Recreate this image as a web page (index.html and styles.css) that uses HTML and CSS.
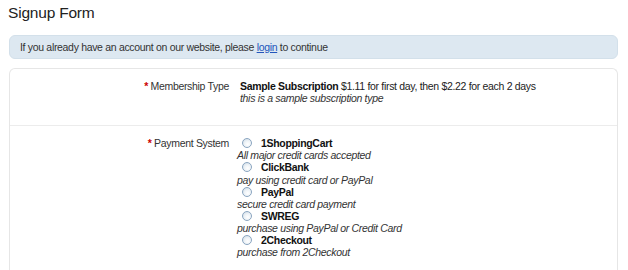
FILE: index.html
```html
<!DOCTYPE html>
<html>
<head>
<meta charset="utf-8">
<link rel="stylesheet" href="styles.css">
</head>
<body>
<h1 class="title">Signup Form</h1>
<div class="info">If you already have an account on our website, please <a href="#" class="link">login</a> to continue</div>
<div class="form">
  <div class="row row-first">
    <div class="label"><span class="req">*</span> Membership Type</div>
    <div class="value">
      <div class="line"><b>Sample Subscription</b> $1.11 for first day, then $2.22 for each 2 days</div>
      <div class="desc">this is a sample subscription type</div>
    </div>
  </div>
  <div class="row">
    <div class="label"><span class="req">*</span> Payment System</div>
    <div class="value value-pay">
      <div class="opt"><span class="radio"></span><b>1ShoppingCart</b></div>
      <div class="desc">All major credit cards accepted</div>
      <div class="opt"><span class="radio"></span><b>ClickBank</b></div>
      <div class="desc">pay using credit card or PayPal</div>
      <div class="opt"><span class="radio"></span><b>PayPal</b></div>
      <div class="desc">secure credit card payment</div>
      <div class="opt"><span class="radio"></span><b>SWREG</b></div>
      <div class="desc">purchase using PayPal or Credit Card</div>
      <div class="opt"><span class="radio"></span><b>2Checkout</b></div>
      <div class="desc">purchase from 2Checkout</div>
    </div>
  </div>
</div>
</body>
</html>
```
FILE: styles.css
```css
body {
  margin: 0;
  padding: 0 10px 0 9px;
  background: #fff;
  font-family: "Liberation Sans", Arial, sans-serif;
  font-size: 10.5px;
  letter-spacing: -0.32px;
  color: #222;
}
.title {
  margin: 0 0 0 -1px;
  padding-top: 3px;
  font-family: "Liberation Sans", Arial, sans-serif;
  font-weight: normal;
  font-size: 15.5px;
  letter-spacing: -0.2px;
  line-height: 20px;
  color: #222;
}
.info {
  margin-top: 12px;
  height: 24px;
  line-height: 22px;
  box-sizing: border-box;
  padding-left: 10px;
  background: #dde8f1;
  border: 1px solid #d3e0ea;
  border-radius: 6px;
  color: #333;
}
.link {
  color: #2255bb;
}
.form {
  margin-top: 9px;
  border: 1px solid #e6e6e6;
  border-bottom: none;
  border-radius: 6px 6px 0 0;
  height: 220px;
}
.row {
  display: flex;
  border-top: 1px solid #ececec;
  padding-top: 11px;
}
.row-first {
  border-top: none;
  height: 45px;
  padding-top: 11px;
}
.label {
  width: 219px;
  text-align: right;
  padding-right: 11px;
  color: #333;
  line-height: 12px;
}
.req {
  color: #c00;
  font-weight: bold;
}
.value {
  line-height: 12px;
}
.value-pay {
  margin-left: -3px;
}
.line b, .opt b {
  color: #111;
}
.desc {
  font-style: italic;
  color: #333;
}
.opt {
  display: flex;
  align-items: center;
  height: 12.25px;
  padding-left: 5px;
}
.radio {
  width: 8px;
  height: 8px;
  border: 1px solid #8aa5c0;
  border-radius: 50%;
  background: radial-gradient(circle at 60% 65%, #ffffff 0, #eef3f7 45%, #c9d6e2 100%);
  margin-right: 9px;
}
```
